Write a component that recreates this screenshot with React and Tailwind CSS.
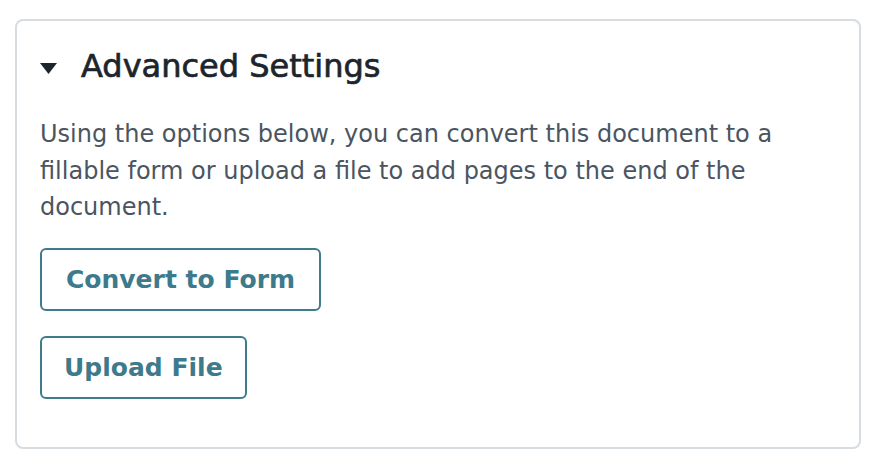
import React, { useState } from 'react';

const font = { fontFamily: '"DejaVu Sans", sans-serif' };

const OutlineButton = ({ children, className = '' }) => (
  <button
    type="button"
    className={`h-[63px] px-6 border-2 border-[#3e7b8c] rounded-md text-[#3d7a8b] font-bold text-[25px] leading-none bg-white ${className}`}
  >
    {children}
  </button>
);

export default function App() {
  const [open, setOpen] = useState(true);

  return (
    <div className="min-h-screen bg-white pt-[19px] pl-[15px]" style={font}>
      <div className="w-[846px] h-[430px] border-2 border-[#d7dce0] rounded-lg pt-[25px] px-[23px]">
        <button
          type="button"
          onClick={() => setOpen(!open)}
          className="flex items-center h-10 text-[#1d252c]"
        >
          <svg width="17" height="11" viewBox="0 0 17 11" className="mt-[5px] mr-6">
            <polygon points="0,0 17,0 8.5,11" fill="#1d252c" />
          </svg>
          {/* stroke fakes the medium weight DejaVu lacks */}
          <span className="text-[32px] leading-10 [-webkit-text-stroke:0.7px_#1d252c]">Advanced Settings</span>
        </button>

        {open && (
          <>
            <p className="mt-[30px] text-[24px] leading-[36.5px] text-[#4a5561]">
              Using the options below, you can convert this document to a fillable form or upload a file to add pages to the end of the document.
            </p>

            <div className="mt-[22px] flex flex-col items-start gap-[25px]">
              <OutlineButton>Convert to Form</OutlineButton>
              <OutlineButton className="px-[22px]">Upload File</OutlineButton>
            </div>
          </>
        )}
      </div>
    </div>
  );
}
